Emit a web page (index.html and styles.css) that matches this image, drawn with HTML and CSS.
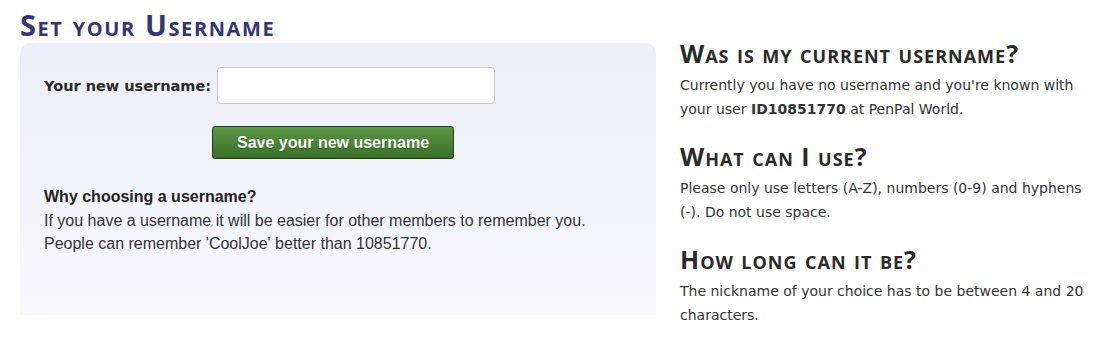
FILE: index.html
```html
<!DOCTYPE html>
<html lang="en">
<head>
  <meta charset="UTF-8">
  <title>Set your Username</title>
  <link rel="stylesheet" href="styles.css">
</head>
<body>

  <div class="page">
    <div class="main">
      <h1>Set your Username</h1>

      <div class="panel">
        <form class="username-form">
          <div class="field">
            <label for="username">Your new username:</label>
            <input type="text" id="username">
          </div>
          <div class="actions">
            <button type="button" class="btn-save">Save your new username</button>
          </div>
        </form>

        <div class="why">
          <h4>Why choosing a username?</h4>
          <p>If you have a username it will be easier for other members to remember you.</p>
          <p>People can remember 'CoolJoe' better than 10851770.</p>
        </div>
      </div>
    </div>

    <div class="side">
      <h2>Was is my current username?</h2>
      <p>Currently you have no username and you're known with your user <b>ID10851770</b> at PenPal World.</p>

      <h2>What can I use?</h2>
      <p>Please only use letters (A-Z), numbers (0-9) and hyphens (-). Do not use space.</p>

      <h2>How long can it be?</h2>
      <p>The nickname of your choice has to be between 4 and 20 characters.</p>
    </div>
  </div>

</body>
</html>
```

FILE: styles.css
```css
/* Reset */
* {
  margin: 0;
  padding: 0;
  box-sizing: border-box;
}

body {
  background: #ffffff;
  color: #333333;
  font-family: 'DejaVu Sans', Verdana, sans-serif;
  font-size: 14px;
}

.page {
  display: flex;
  gap: 24px;
  padding: 8px 20px 0 20px;
}

/* Left column */
.main {
  width: 636px;
}

h1 {
  font-family: 'Open Sans', 'DejaVu Sans', sans-serif;
  font-variant: small-caps;
  font-size: 29px;
  font-weight: bold;
  letter-spacing: 1.6px;
  color: #343478;
  line-height: 34px;
}

.panel {
  margin-top: 1px;
  height: 272px;
  background: linear-gradient(to bottom, #eeeefa, #f3f3fb 50%, #f7f7fc);
  border-radius: 10px 10px 0 0;
  padding: 24px 24px 0 24px;
}

.field {
  display: flex;
  align-items: center;
  gap: 6px;
}

.field label {
  font-weight: bold;
  font-size: 14.5px;
  color: #2a2a2a;
}

.field input {
  width: 278px;
  height: 37px;
  border: 1px solid #c9c9c9;
  border-radius: 4px;
  background: #ffffff;
}

.actions {
  padding: 22px 0 0 168px;
}

.btn-save {
  width: 242px;
  height: 33px;
  border: 1px solid #203d17;
  border-radius: 3px;
  background: linear-gradient(to bottom, #5c9646, #3c7029);
  color: #ffffff;
  font-family: 'Liberation Sans', Arial, sans-serif;
  font-weight: bold;
  font-size: 16px;
  text-shadow: 0 1px 1px rgba(0, 0, 0, 0.3);
  cursor: pointer;
}

.why {
  margin-top: 26px;
  font-family: 'Liberation Sans', Arial, sans-serif;
  font-size: 16px;
  line-height: 23.5px;
  color: #333333;
}

.why h4 {
  color: #222222;
}

/* Right column */
.side {
  width: 410px;
}

.side h2 {
  font-family: 'Open Sans', 'DejaVu Sans', sans-serif;
  font-variant: small-caps;
  font-size: 25px;
  font-weight: bold;
  letter-spacing: 1px;
  color: #2a2a2a;
  line-height: 30px;
  margin: 20px 0 5px 0;
}

.side h2:first-child {
  margin-top: 30px;
}

.side p {
  font-size: 14px;
  line-height: 24px;
}
```
